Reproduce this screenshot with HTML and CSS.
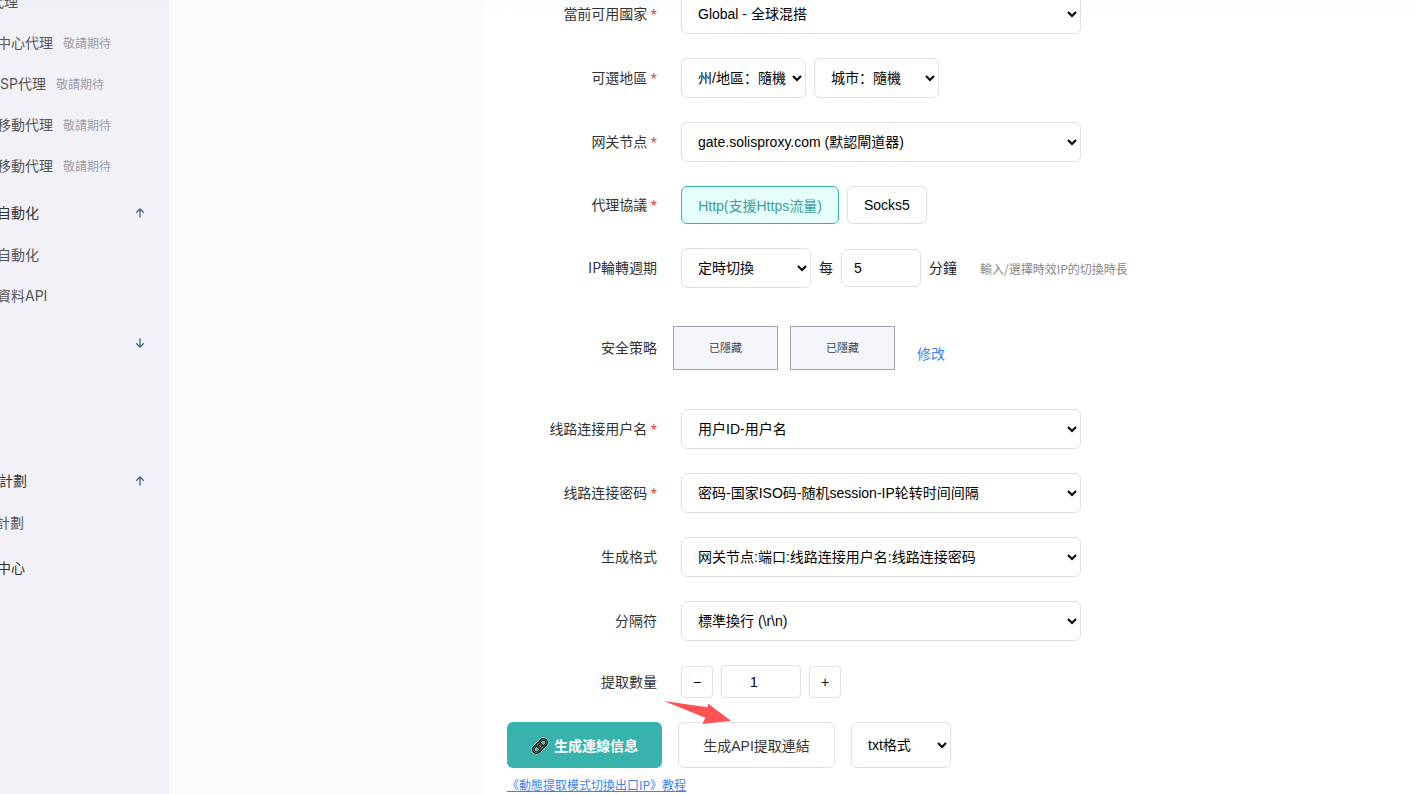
FILE: index.html
```html
<!DOCTYPE html>
<html lang="zh-CN">
<head>
  <meta charset="UTF-8">
  <title>動態代理提取</title>
  <link rel="stylesheet" href="styles.css">
</head>
<body>
  <div class="layout">
    <nav class="sidebar">
      <div class="nav-item first">代理</div>
      <div class="nav-item">中心代理<span class="soon">敬請期待</span></div>
      <div class="nav-item isp">SP代理<span class="soon">敬請期待</span></div>
      <div class="nav-item">移動代理<span class="soon">敬請期待</span></div>
      <div class="nav-item">移動代理<span class="soon">敬請期待</span></div>
      <div class="nav-group">自動化
        <svg class="arrow" viewBox="0 0 10 10"><path d="M5 9.5V1M1.2 4.8L5 1l3.8 3.8"/></svg>
      </div>
      <div class="nav-item">自動化</div>
      <div class="nav-item">資料API</div>
      <div class="nav-group">
        <svg class="arrow" viewBox="0 0 10 10"><path d="M5 .5V9M1.2 5.2L5 9l3.8-3.8"/></svg>
      </div>
      <div class="nav-group plan">計劃
        <svg class="arrow" viewBox="0 0 10 10"><path d="M5 9.5V1M1.2 4.8L5 1l3.8 3.8"/></svg>
      </div>
      <div class="nav-item plan-item">計劃</div>
      <div class="nav-group center">中心</div>
    </nav>

    <main class="panel">
      <form class="form">
        <div class="row">
          <label class="label">當前可用國家<span class="req">*</span></label>
          <select class="select"><option>Global - 全球混搭</option></select>
        </div>
        <div class="row">
          <label class="label">可選地區<span class="req">*</span></label>
          <div class="controls">
            <select class="select region"><option>州/地區：隨機</option></select>
            <select class="select region"><option>城市：隨機</option></select>
          </div>
        </div>
        <div class="row">
          <label class="label">网关节点<span class="req">*</span></label>
          <select class="select"><option>gate.solisproxy.com (默認閘道器)</option></select>
        </div>
        <div class="row">
          <label class="label">代理協議<span class="req">*</span></label>
          <div class="controls">
            <button type="button" class="option active">Http(支援Https流量)</button>
            <button type="button" class="option">Socks5</button>
          </div>
        </div>
        <div class="row">
          <label class="label">IP輪轉週期</label>
          <div class="controls">
            <select class="select rotate"><option>定時切換</option></select>
            <span class="unit">每</span>
            <input class="input minutes" type="text" value="5">
            <span class="unit">分鐘</span>
            <span class="hint">輸入/選擇時效IP的切換時長</span>
          </div>
        </div>
        <div class="row policy">
          <label class="label">安全策略</label>
          <div class="controls">
            <div class="masked">已隱藏</div>
            <div class="masked">已隱藏</div>
            <a class="edit">修改</a>
          </div>
        </div>
        <div class="row">
          <label class="label">线路连接用户名<span class="req">*</span></label>
          <select class="select"><option>用户ID-用户名</option></select>
        </div>
        <div class="row">
          <label class="label">线路连接密码<span class="req">*</span></label>
          <select class="select"><option>密码-国家ISO码-随机session-IP轮转时间间隔</option></select>
        </div>
        <div class="row">
          <label class="label">生成格式</label>
          <select class="select"><option>网关节点:端口:线路连接用户名:线路连接密码</option></select>
        </div>
        <div class="row">
          <label class="label">分隔符</label>
          <select class="select"><option>標準換行 (\r\n)</option></select>
        </div>
        <div class="row">
          <label class="label">提取數量</label>
          <div class="controls stepper">
            <button type="button" class="step">−</button>
            <input class="input count" type="text" value="1">
            <button type="button" class="step">+</button>
          </div>
        </div>

        <div class="actions">
          <button type="button" class="btn primary">
            <svg class="chain" viewBox="0 0 18 18">
              <g transform="rotate(-45 9 9)" fill="none">
                <g stroke="#d5eeec" stroke-width="3.8">
                  <rect x="0.9" y="5.9" width="10" height="6.2" rx="3.1"/>
                  <rect x="7.1" y="5.9" width="10" height="6.2" rx="3.1"/>
                </g>
                <g stroke="#111" stroke-width="2.8">
                  <rect x="0.9" y="5.9" width="10" height="6.2" rx="3.1"/>
                  <rect x="7.1" y="5.9" width="10" height="6.2" rx="3.1"/>
                </g>
                <g stroke="#bbb" stroke-width="0.5">
                  <rect x="0.9" y="5.9" width="10" height="6.2" rx="3.1"/>
                  <rect x="7.1" y="5.9" width="10" height="6.2" rx="3.1"/>
                </g>
              </g>
            </svg>
            生成連線信息
          </button>
          <button type="button" class="btn">生成API提取連結</button>
          <select class="select format"><option>txt格式</option></select>
        </div>
        <a class="guide">《動態提取模式切換出口IP》教程</a>
      </form>
    </main>
  </div>

  <svg class="pointer" viewBox="0 0 68 24"><path d="M0 0L43.5 6.3L44.2 2.7L67 19.7L38.4 23L41.3 16.7Z"/></svg>
</body>
</html>
```
FILE: styles.css
```css
* {
  box-sizing: border-box;
}
body {
  margin: 0;
  height: 794px;
  overflow: hidden;
  position: relative;
  background: #f8fafc;
  font-family: "Noto Sans CJK SC", sans-serif;
  font-size: 14px;
  color: #333;
}
.layout {
  display: flex;
  height: 794px;
}

/* sidebar */
.sidebar {
  width: 169px;
  flex-shrink: 0;
  overflow: hidden;
  background: linear-gradient(#eef0f6, #f2f1f7 16px);
  border-right: 1px solid #eeeef4;
  font-family: Inter, "Noto Sans CJK SC", sans-serif;
  white-space: nowrap;
}
.nav-item {
  display: flex;
  align-items: center;
  height: 41px;
  margin-left: -3px;
  padding-bottom: 4px;
  color: #555;
}
.nav-item.first {
  margin-top: -18px;
  margin-left: -10px;
}
.nav-item.isp {
  margin-left: 0;
}
.soon {
  margin-left: 10px;
  padding-top: 2px;
  font-size: 12px;
  color: #9c9ca8;
}
.nav-group {
  display: flex;
  align-items: center;
  height: 44px;
  margin: 4px 23px 0 -3px;
  padding-bottom: 2px;
}
.nav-group.plan {
  margin-top: 94px;
  margin-left: -1px;
}
.plan-item {
  margin-left: -4px;
}
.nav-group.center {
  margin-top: 2px;
}
.arrow {
  width: 10px;
  height: 10px;
  margin-top: 2px;
  margin-left: auto;
  fill: none;
  stroke: #4a6282;
  stroke-width: 1.3;
}

/* form */
.panel {
  flex: 1;
  margin-left: 314px;
  padding-left: 24px;
  background: linear-gradient(#fafcff, #fff 12px);
}
.form {
  display: flex;
  flex-direction: column;
  gap: 24px;
  margin-top: -6px;
}
.row {
  display: flex;
  align-items: center;
  gap: 24px;
}
.label {
  width: 150px;
  padding-bottom: 2px;
  text-align: right;
  line-height: 20px;
}
.req {
  margin-left: 3px;
  font-family: "Noto Sans", sans-serif;
  font-size: 12px;
  line-height: 1;
  color: #e53935;
}
.controls {
  display: flex;
  align-items: center;
  gap: 8px;
}
.select,
.input,
.option,
.step,
.btn {
  font-family: "Liberation Sans", "Noto Sans CJK SC", sans-serif;
  font-size: 14px;
  color: #000;
  background-color: #fff;
  border: 1px solid #e0e0e0;
  border-radius: 6px;
}
.select {
  width: 400px;
  height: 40px;
  padding: 8px 12px;
}
.select.region {
  width: 125px;
  padding-right: 0;
}
.select.rotate {
  width: 130px;
}
.option {
  height: 38px;
  padding: 0 16px;
}
.option.active {
  width: 158px;
  color: #3a9e98;
  background: #e6fffb;
  border-color: #38b2ac;
}
.input {
  width: 80px;
  height: 38px;
  padding: 0 12px;
}
.unit {
  padding-bottom: 2px;
  color: #222;
}
.hint {
  margin-left: 15px;
  font-size: 12px;
  color: #888;
}
.policy {
  height: 73px;
  padding-bottom: 2px;
}
.policy .controls {
  gap: 12px;
  margin-left: -8px;
}
.masked {
  width: 105px;
  height: 44px;
  line-height: 41px;
  text-align: center;
  font-size: 11px;
  color: #374151;
  background: #f5f6fc;
  border: 1px solid #9ca3af;
}
.edit {
  margin-left: 10px;
  padding-top: 10px;
  color: #3b82f6;
}
.stepper {
  align-items: flex-end;
}
.step {
  width: 32px;
  height: 32px;
  padding: 0;
  border-radius: 4px;
}
.input.count {
  height: 33px;
  padding: 0 26px 0 12px;
  text-align: center;
  border-radius: 4px;
}

/* bottom buttons */
.actions {
  display: flex;
  gap: 16px;
}
.btn {
  display: flex;
  align-items: center;
  justify-content: center;
  width: 157px;
  height: 46px;
  padding: 0;
  color: #333;
}
.btn.primary {
  width: 155px;
  gap: 5px;
  color: #fff;
  font-weight: bold;
  background: #38b2ac;
  border: none;
}
.chain {
  width: 18px;
  height: 18px;
  margin-top: 2px;
}
.select.format {
  width: 100px;
  height: 46px;
}
.guide {
  align-self: flex-start;
  margin-top: -16px;
  font-size: 12px;
  line-height: 18px;
  color: #3b82f6;
  text-decoration: underline;
}
.pointer {
  position: absolute;
  left: 664px;
  top: 701px;
  width: 68px;
  height: 24px;
  fill: #ff5252;
}
```
